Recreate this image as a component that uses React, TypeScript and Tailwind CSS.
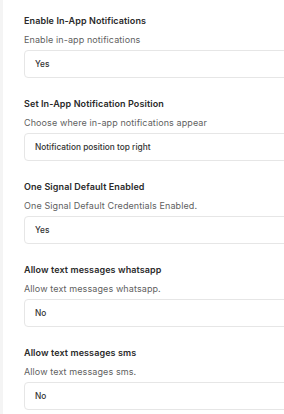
import React from "react";

const items = [
  { title: "Enable In-App Notifications", desc: "Enable in-app notifications", value: "Yes" },
  { title: "Set In-App Notification Position", desc: "Choose where in-app notifications appear", value: "Notification position top right" },
  { title: "One Signal Default Enabled", desc: "One Signal Default Credentials Enabled.", value: "Yes" },
  { title: "Allow text messages whatsapp", desc: "Allow text messages whatsapp.", value: "No" },
  { title: "Allow text messages sms", desc: "Allow text messages sms.", value: "No" },
];

export default function App() {
  return (
    <div className="flex w-[284px] h-[414px] overflow-hidden bg-white" style={{ fontFamily: "Inter, 'Noto Sans', sans-serif" }}>
      <div className="w-[3px] shrink-0 bg-[#f4f4f4]" />
      <div className="flex flex-col pl-[21px] pt-[14px]">
        {items.map((it) => (
          <div key={it.title} className="flex flex-col mb-[19px]">
            <div className="text-[9px] leading-[14px] font-semibold text-[#2a2a2a] whitespace-nowrap tracking-[0.1px]">{it.title}</div>
            <div className="mt-[5px] text-[9px] leading-[14px] text-[#5f5f5f] whitespace-nowrap tracking-[0.1px]">{it.desc}</div>
            <div className="mt-[3px] w-[280px] h-[28px] border border-[#e6e6e6] rounded-[4px] flex items-center pl-[10px] text-[8.3px] font-medium text-[#333] whitespace-nowrap">
              {it.value}
            </div>
          </div>
        ))}
      </div>
    </div>
  );
}
